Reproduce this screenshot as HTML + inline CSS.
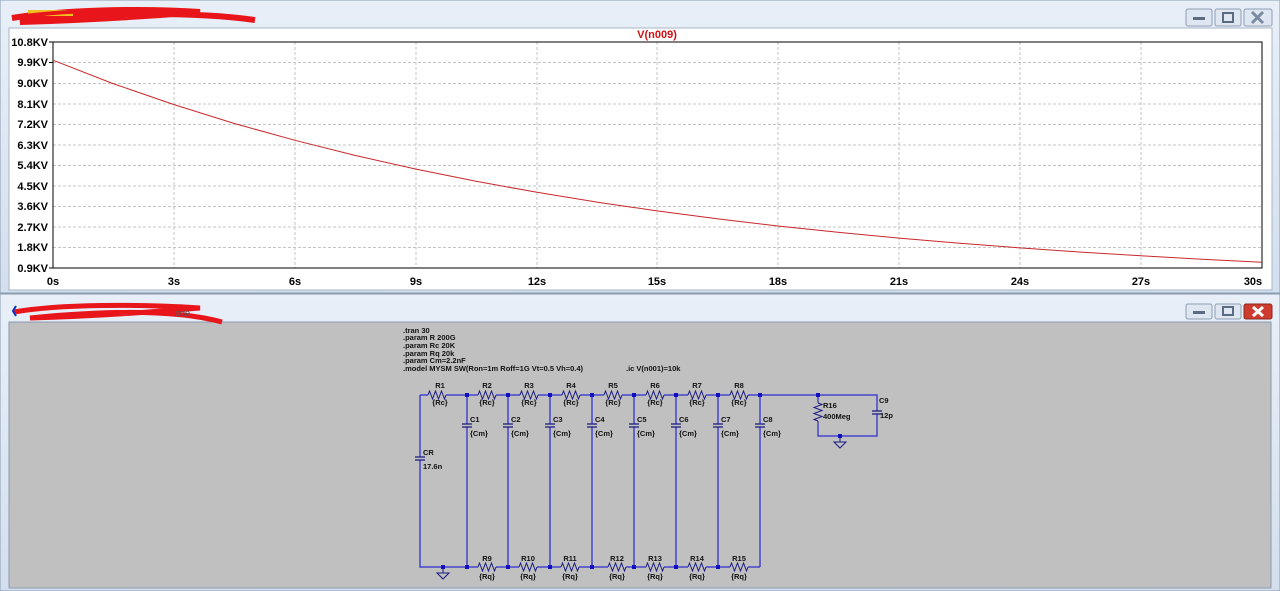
<!DOCTYPE html>
<html><head><meta charset="utf-8"><style>
html,body{margin:0;padding:0;width:1280px;height:591px;overflow:hidden;background:#d6e1ef;}
svg{display:block}
</style></head><body>
<svg width="1280" height="591" viewBox="0 0 1280 591" xmlns="http://www.w3.org/2000/svg" font-family="Liberation Sans, sans-serif">
<defs>
<linearGradient id="tb" x1="0" y1="0" x2="0" y2="1"><stop offset="0" stop-color="#e8eff8"/><stop offset="1" stop-color="#d3dfee"/></linearGradient>
<path id="rz" d="M-9 0 l1.5 -4 l3 8 l3 -8 l3 8 l3 -8 l3 8 l1.5 -4" fill="none" stroke="#1a1a80" stroke-width="1"/>
</defs>
<rect x="0" y="0" width="1280" height="293" fill="url(#tb)" stroke="#8a9bb0"/>
<rect x="9" y="28" width="1263" height="262" fill="#fff" stroke="#a9b6c6"/>
<path d="M12 18 C60 10 140 8 200 12 C150 16 90 20 20 22 C80 14 180 10 255 20" stroke="#e8151a" stroke-width="6" fill="none"/>
<rect x="28" y="10" width="45" height="6" fill="#f0c020"/>
<path d="M12 18 C60 10 140 8 200 12" stroke="#e8151a" stroke-width="4" fill="none"/>
<g stroke="#8e9db3" fill="#dde6f1"><rect x="1186" y="9" width="26" height="17" rx="2"/><rect x="1215" y="9" width="26" height="17" rx="2"/><rect x="1244" y="9" width="28" height="17" rx="2"/></g>
<rect x="1193" y="17" width="12" height="3" fill="#5a6b82"/>
<rect x="1223" y="13" width="10" height="9" fill="none" stroke="#5a6b82" stroke-width="2"/>
<path d="M1252 12l11 11M1263 12l-11 11" stroke="#7a8aa0" stroke-width="3"/>
<g stroke="#c4c4c4" stroke-dasharray="3,2" stroke-width="1">
<line x1="53" y1="62.5" x2="1262" y2="62.5"/><line x1="53" y1="83.5" x2="1262" y2="83.5"/><line x1="53" y1="104" x2="1262" y2="104"/><line x1="53" y1="124.5" x2="1262" y2="124.5"/><line x1="53" y1="145" x2="1262" y2="145"/><line x1="53" y1="165.5" x2="1262" y2="165.5"/><line x1="53" y1="186" x2="1262" y2="186"/><line x1="53" y1="206.5" x2="1262" y2="206.5"/><line x1="53" y1="227" x2="1262" y2="227"/><line x1="53" y1="247.5" x2="1262" y2="247.5"/>
<line x1="174" y1="42" x2="174" y2="268"/><line x1="295" y1="42" x2="295" y2="268"/><line x1="416" y1="42" x2="416" y2="268"/><line x1="537" y1="42" x2="537" y2="268"/><line x1="657" y1="42" x2="657" y2="268"/><line x1="778" y1="42" x2="778" y2="268"/><line x1="899" y1="42" x2="899" y2="268"/><line x1="1020" y1="42" x2="1020" y2="268"/><line x1="1141" y1="42" x2="1141" y2="268"/>
</g>
<rect x="53" y="42" width="1209" height="226" fill="none" stroke="#000" stroke-width="1"/>
<g font-size="11" font-weight="bold" text-anchor="end" fill="#000">
<text x="48" y="46">10.8KV</text><text x="48" y="66">9.9KV</text><text x="48" y="87">9.0KV</text><text x="48" y="108">8.1KV</text><text x="48" y="128">7.2KV</text><text x="48" y="149">6.3KV</text><text x="48" y="169">5.4KV</text><text x="48" y="190">4.5KV</text><text x="48" y="210">3.6KV</text><text x="48" y="231">2.7KV</text><text x="48" y="251">1.8KV</text><text x="48" y="272">0.9KV</text>
</g>
<g stroke="#000"><line x1="49" y1="42" x2="53" y2="42"/><line x1="49" y1="62.5" x2="53" y2="62.5"/><line x1="49" y1="268" x2="53" y2="268"/></g>
<g font-size="11" font-weight="bold" text-anchor="middle" fill="#000">
<text x="53" y="285">0s</text><text x="174" y="285">3s</text><text x="295" y="285">6s</text><text x="416" y="285">9s</text><text x="537" y="285">12s</text><text x="657" y="285">15s</text><text x="778" y="285">18s</text><text x="899" y="285">21s</text><text x="1020" y="285">24s</text><text x="1141" y="285">27s</text><text x="1253" y="285">30s</text>
</g>
<text x="657" y="38" font-size="11" font-weight="bold" fill="#d01010" text-anchor="middle">V(n009)</text>
<polyline fill="none" stroke="#c8282a" stroke-width="1" points="53,60.2 113,83.6 174,104.6 234,123.4 295,140.3 355,155.4 416,169.1 476,181.3 537,192.3 597,202.1 657,210.9 718,218.9 778,226 839,232.4 899,238.1 960,243.3 1020,247.9 1081,252.1 1141,255.8 1202,259.2 1262,262.2"/>
<rect x="0" y="294" width="1280" height="297" fill="url(#tb)" stroke="#8a9bb0"/>
<rect x="9" y="322" width="1262" height="266" fill="#c0c0c0" stroke="#8a9bb0"/>
<path d="M14 312 C60 304 140 304 200 308 C150 312 100 316 30 318 C90 312 170 308 222 322" stroke="#e8151a" stroke-width="5" fill="none"/>
<text x="175" y="316" font-size="9" fill="#555">ode</text>
<path d="M16 306 L13 311 L16 316" stroke="#1030c0" stroke-width="2" fill="none"/>
<g stroke="#8e9db3" fill="#dde6f1"><rect x="1186" y="304" width="26" height="15" rx="2"/><rect x="1215" y="304" width="26" height="15" rx="2"/></g>
<rect x="1244" y="304" width="28" height="15" rx="2" fill="#cf3b2e" stroke="#8a2a20"/>
<rect x="1193" y="311" width="12" height="3" fill="#5a6b82"/>
<rect x="1223" y="307" width="10" height="8" fill="none" stroke="#5a6b82" stroke-width="2"/>
<path d="M1253 307l10 9M1263 307l-10 9" stroke="#fff" stroke-width="3"/>
<g font-size="7.5" font-weight="bold" fill="#111">
<text x="403" y="333">.tran 30</text><text x="403" y="340">.param R 200G</text><text x="403" y="348">.param Rc 20K</text><text x="403" y="356">.param Rq 20k</text><text x="403" y="363">.param Cm=2.2nF</text><text x="403" y="371">.model MYSM SW(Ron=1m Roff=1G Vt=0.5 Vh=0.4)</text><text x="626" y="371">.ic V(n001)=10k</text>
</g>
<g stroke="#4444cc" stroke-width="1.5" fill="none">
<path d="M420 395 V567 H760"/>
<path d="M420 395 H877 V436 H818 V395"/>
<path d="M467 395 V567 M508 395 V567 M550 395 V567 M592 395 V567 M634 395 V567 M676 395 V567 M718 395 V567 M760 395 V567"/>
</g>
<!-- cover wire under resistors -->
<g stroke="#c0c0c0" stroke-width="4">
<path d="M428 395h18M478 395h18M520 395h18M562 395h18M604 395h18M646 395h18M688 395h18M730 395h18"/>
<path d="M478 567h18M519 567h18M561 567h18M608 567h18M646 567h18M688 567h18M730 567h18"/>
<path d="M818 400v24"/>
</g>
<use href="#rz" x="437" y="395"/><use href="#rz" x="487" y="395"/><use href="#rz" x="529" y="395"/><use href="#rz" x="571" y="395"/><use href="#rz" x="613" y="395"/><use href="#rz" x="655" y="395"/><use href="#rz" x="697" y="395"/><use href="#rz" x="739" y="395"/>
<use href="#rz" x="487" y="567"/><use href="#rz" x="528" y="567"/><use href="#rz" x="570" y="567"/><use href="#rz" x="617" y="567"/><use href="#rz" x="655" y="567"/><use href="#rz" x="697" y="567"/><use href="#rz" x="739" y="567"/>
<use href="#rz" transform="translate(818 412) rotate(90)"/>
<g stroke="#1a1a80" stroke-width="1"><path d="M818 400v3M818 421v3"/></g>
<g stroke="#c0c0c0" stroke-width="4"><path d="M467 424v3M508 424v3M550 424v3M592 424v3M634 424v3M676 424v3M718 424v3M760 424v3M420 457v3M877 411v3"/></g>
<g stroke="#1a1a80" stroke-width="1.2">
<path d="M462 424h10M462 427h10M503 424h10M503 427h10M545 424h10M545 427h10M587 424h10M587 427h10M629 424h10M629 427h10M671 424h10M671 427h10M713 424h10M713 427h10M755 424h10M755 427h10M415 457h10M415 460h10M872 411h10M872 414h10"/>
</g>
<g stroke="#1a1a80" fill="none"><path d="M443 567v6M437 573h12l-6 6z"/><path d="M840 436v6M834 442h12l-6 6z"/></g>
<g fill="#1010c0">
<rect x="465" y="393" width="4" height="4"/><rect x="506" y="393" width="4" height="4"/><rect x="548" y="393" width="4" height="4"/><rect x="590" y="393" width="4" height="4"/><rect x="632" y="393" width="4" height="4"/><rect x="674" y="393" width="4" height="4"/><rect x="716" y="393" width="4" height="4"/><rect x="758" y="393" width="4" height="4"/><rect x="816" y="393" width="4" height="4"/><rect x="838" y="434" width="4" height="4"/>
<rect x="441" y="565" width="4" height="4"/><rect x="465" y="565" width="4" height="4"/><rect x="506" y="565" width="4" height="4"/><rect x="548" y="565" width="4" height="4"/><rect x="590" y="565" width="4" height="4"/><rect x="632" y="565" width="4" height="4"/><rect x="674" y="565" width="4" height="4"/><rect x="716" y="565" width="4" height="4"/>
</g>
<g font-size="7.5" font-weight="bold" fill="#111" text-anchor="middle">
<text x="440" y="388">R1</text><text x="487" y="388">R2</text><text x="529" y="388">R3</text><text x="571" y="388">R4</text><text x="613" y="388">R5</text><text x="655" y="388">R6</text><text x="697" y="388">R7</text><text x="739" y="388">R8</text>
<text x="440" y="405">{Rc}</text><text x="487" y="405">{Rc}</text><text x="529" y="405">{Rc}</text><text x="571" y="405">{Rc}</text><text x="613" y="405">{Rc}</text><text x="655" y="405">{Rc}</text><text x="697" y="405">{Rc}</text><text x="739" y="405">{Rc}</text>
<text x="487" y="561">R9</text><text x="528" y="561">R10</text><text x="570" y="561">R11</text><text x="617" y="561">R12</text><text x="655" y="561">R13</text><text x="697" y="561">R14</text><text x="739" y="561">R15</text>
<text x="487" y="579">{Rq}</text><text x="528" y="579">{Rq}</text><text x="570" y="579">{Rq}</text><text x="617" y="579">{Rq}</text><text x="655" y="579">{Rq}</text><text x="697" y="579">{Rq}</text><text x="739" y="579">{Rq}</text>
</g>
<g font-size="7.5" font-weight="bold" fill="#111">
<text x="470" y="422">C1</text><text x="511" y="422">C2</text><text x="553" y="422">C3</text><text x="595" y="422">C4</text><text x="637" y="422">C5</text><text x="679" y="422">C6</text><text x="721" y="422">C7</text><text x="763" y="422">C8</text>
<text x="470" y="436">{Cm}</text><text x="511" y="436">{Cm}</text><text x="553" y="436">{Cm}</text><text x="595" y="436">{Cm}</text><text x="637" y="436">{Cm}</text><text x="679" y="436">{Cm}</text><text x="721" y="436">{Cm}</text><text x="763" y="436">{Cm}</text>
<text x="423" y="455">CR</text><text x="423" y="469">17.6n</text>
<text x="823" y="408">R16</text><text x="823" y="419">400Meg</text>
<text x="879" y="403">C9</text><text x="880" y="418">12p</text>
</g>
</svg>
</body></html>
